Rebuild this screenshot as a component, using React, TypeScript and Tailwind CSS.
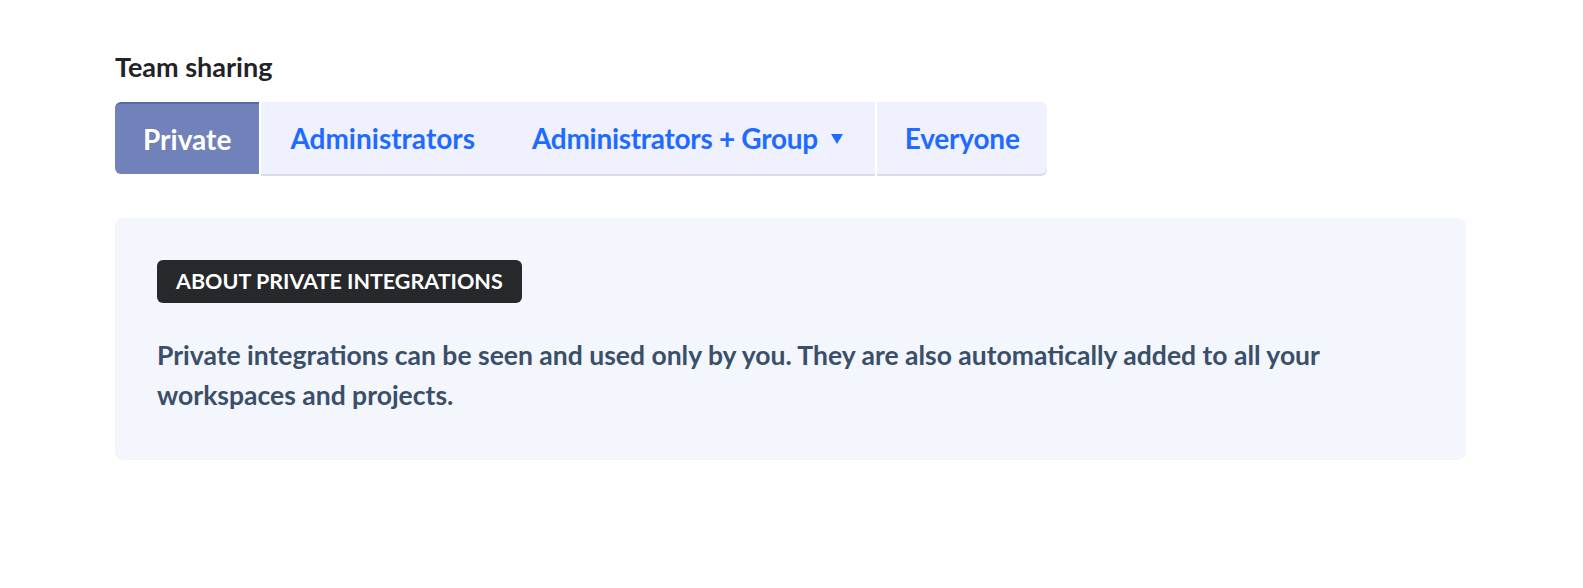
import React from "react";

export default function App() {
  return (
    <div
      className="min-h-[588px] bg-white pl-[115px] pr-[117px] pt-[50px]"
      style={{ fontFamily: "Lato, 'Noto Sans', sans-serif" }}
    >
      <h2 className="text-[27px] font-bold leading-[34px] text-[#222326]">Team sharing</h2>
      <div className="mt-[18px] flex h-[72px] items-stretch">
        <button className="flex items-center rounded-l-[6px] border-t-2 border-[#5d69a3] bg-[#7181b9] px-[28px] text-[28px] font-bold text-white">
          Private
        </button>
        <div className="ml-[2px] flex items-center bg-[#eff2fe] shadow-[0_2px_0_#d9dce6]">
          <button className="flex h-full items-center px-[29px] text-[28px] font-bold text-[#1f6bff]">
            Administrators
          </button>
          <button className="flex h-full items-center gap-[13px] pl-[28px] pr-[32px] text-[28px] font-bold text-[#1f6bff]">
            <span className="tracking-[-0.3px]">Administrators + Group</span>
            <svg width="12" height="10" viewBox="0 0 12 10" className="mt-[2px]">
              <path d="M0 0 H12 L6 10 Z" fill="#1f6bff" />
            </svg>
          </button>
        </div>
        <button className="ml-[2px] flex items-center rounded-r-[6px] bg-[#eff2fe] pl-[28px] pr-[27px] text-[28px] font-bold text-[#1f6bff] shadow-[0_2px_0_#d9dce6]">
          <span className="tracking-[-0.2px]">Everyone</span>
        </button>
      </div>
      <div className="mt-[44px] rounded-[8px] bg-[#f3f6fd] px-[42px] pb-[45px] pt-[42px]">
        <span className="inline-flex h-[43px] items-center rounded-[6px] bg-[#27282b] px-[19px] text-[21.5px] font-bold uppercase text-white">
          About private integrations
        </span>
        <p className="mt-[32px] text-[26.5px] font-bold leading-[40px] text-[#3a4f68]">
          Private integrations can be seen and used only by you. They are also automatically added to all your
          workspaces and projects.
        </p>
      </div>
    </div>
  );
}
